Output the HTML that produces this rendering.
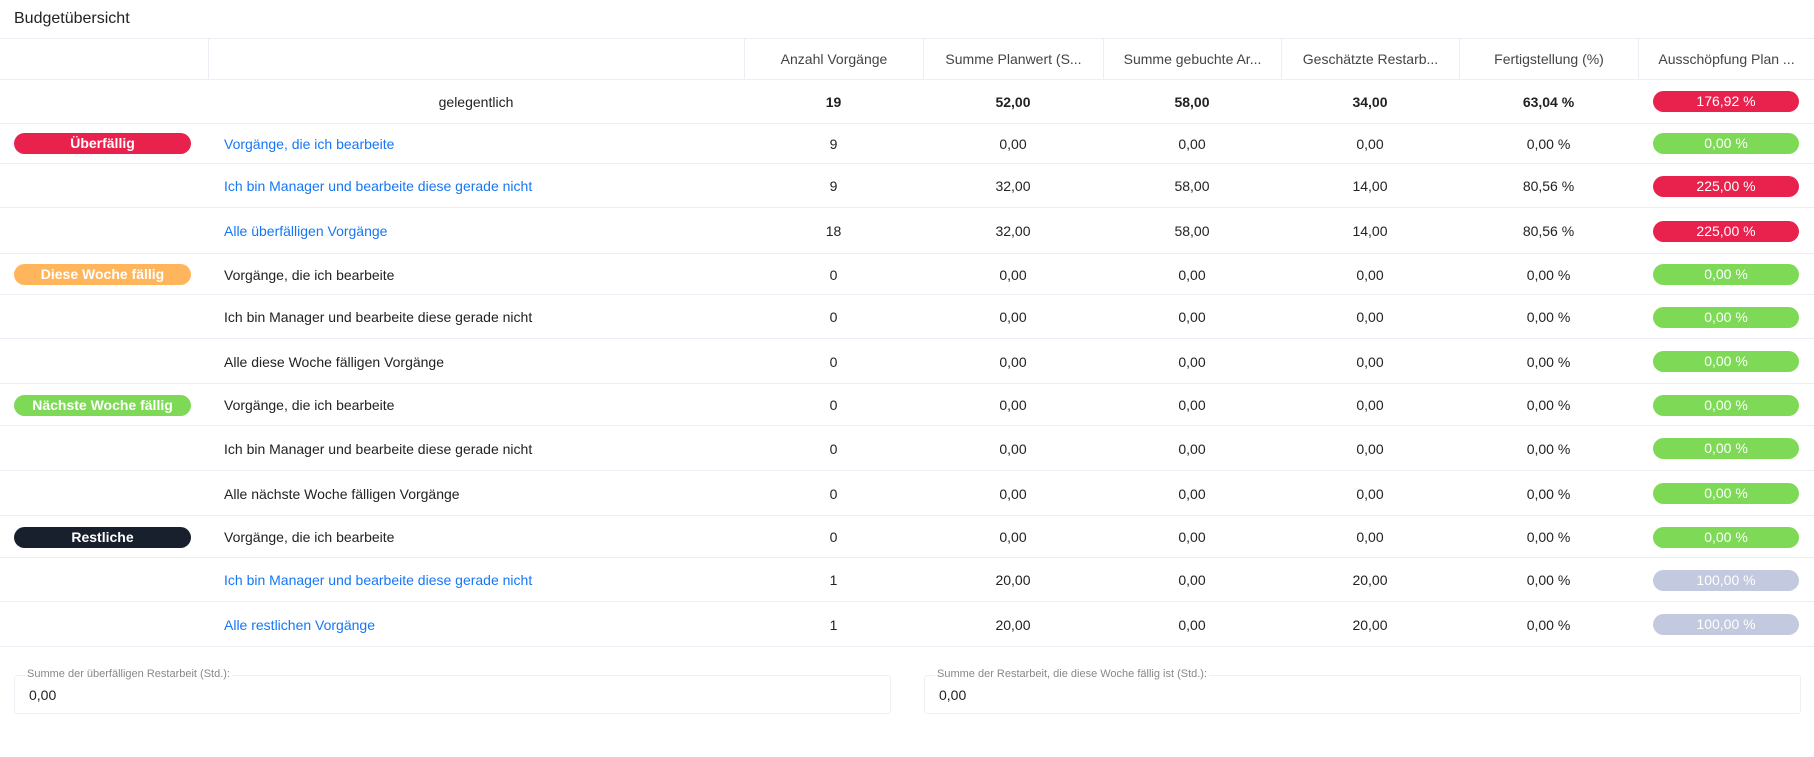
<!DOCTYPE html>
<html><head><meta charset="utf-8"><style>
*{margin:0;padding:0;box-sizing:border-box}
body{width:1814px;height:757px;background:#fff;font-family:"Liberation Sans",sans-serif;font-size:14px;color:#222;position:relative;overflow:hidden}
.title{position:absolute;left:14px;top:10px;font-size:16px;color:#222}
.row{position:absolute;left:0;width:1814px;border-bottom:1px solid #eceef5;display:flex;align-items:center}
.c{position:absolute;top:0;bottom:0;display:flex;align-items:center;justify-content:center;white-space:nowrap}
.hdr .c{color:#444;border-left:1px solid #eceef5}
.hdr .c:first-child{border-left:none}
.lab{justify-content:flex-start!important;padding-left:16px}
.pill{position:absolute;left:14px;width:177px;height:21px;border-radius:11px;color:#fff;font-weight:bold;text-align:center;line-height:21px;font-size:14px}
.bad{width:146px;height:21px;border-radius:11px;color:#fff;text-align:center;line-height:21px}
.r{background:#e8214d}.g{background:#7ed957}.gr{background:#c3c9de}
a{color:#1677f5;text-decoration:none}
b{font-weight:bold}
.field{position:absolute;top:675px;height:39px;border:1px solid #eef0f6;border-radius:3px}
.field span{position:absolute;top:-8px;left:10px;background:#fff;font-size:11px;color:#888;padding:0 2px}
.field div{position:absolute;left:14px;top:11px;font-size:14px}
</style></head><body>
<div class="title">Budgetübersicht</div>
<div id="t"></div>
<div class="field" style="left:14px;width:877px"><span>Summe der überfälligen Restarbeit (Std.):</span><div>0,00</div></div>
<div class="field" style="left:924px;width:877px"><span>Summe der Restarbeit, die diese Woche fällig ist (Std.):</span><div>0,00</div></div>
<script>
const X=[0,208,744,923,1103,1281,1459,1638,1814];
function cells(v,cls){let h='';for(let i=0;i<8;i++){h+=`<div class="c ${i==1&&cls!='hdr'&&cls!='sum'?'lab':''}" style="left:${X[i]}px;width:${X[i+1]-X[i]}px">${v[i]||''}</div>`}return h}
let out='';
function row(top,h,v,cls,pill){out+=`<div class="row ${cls||''}" style="top:${top}px;height:${h}px;${cls=='hdr'?'border-top:1px solid #eceef5':''}">${cells(v,cls)}${pill||''}</div>`}
row(38,42,['','','Anzahl Vorgänge','Summe Planwert (S...','Summe gebuchte Ar...','Geschätzte Restarb...','Fertigstellung (%)','Ausschöpfung Plan ...'],'hdr');
row(80,44,['','gelegentlich','<b>19</b>','<b>52,00</b>','<b>58,00</b>','<b>34,00</b>','<b>63,04 %</b>','<div class="bad r">176,92 %</div>'],'sum');
const B=p=>`<div class="bad ${p[0]}">${p[1]}</div>`;
const groups=[
 ['Überfällig','#e8214d',[['<a>Vorgänge, die ich bearbeite</a>','9','0,00','0,00','0,00','0,00 %',['g','0,00 %']],['<a>Ich bin Manager und bearbeite diese gerade nicht</a>','9','32,00','58,00','14,00','80,56 %',['r','225,00 %']],['<a>Alle überfälligen Vorgänge</a>','18','32,00','58,00','14,00','80,56 %',['r','225,00 %']]]],
 ['Diese Woche fällig','#ffb55c',[['Vorgänge, die ich bearbeite'],['Ich bin Manager und bearbeite diese gerade nicht'],['Alle diese Woche fälligen Vorgänge']]],
 ['Nächste Woche fällig','#7ed957',[['Vorgänge, die ich bearbeite'],['Ich bin Manager und bearbeite diese gerade nicht'],['Alle nächste Woche fälligen Vorgänge']]],
 ['Restliche','#18202e',[['Vorgänge, die ich bearbeite'],['<a>Ich bin Manager und bearbeite diese gerade nicht</a>','1','20,00','0,00','20,00','0,00 %',['gr','100,00 %']],['<a>Alle restlichen Vorgänge</a>','1','20,00','0,00','20,00','0,00 %',['gr','100,00 %']]]]];
const tops=[[124,165,209,255],[255,296,340,385],[385,427,472,517],[517,559,603,648]];
groups.forEach((g,gi)=>{g[2].forEach((r,ri)=>{
 if(r.length==1)r=[r[0],'0','0,00','0,00','0,00','0,00 %',['g','0,00 %']];
 const t=tops[gi][ri],h=tops[gi][ri+1]-t-1;
 const pill=ri==0?`<div class="pill" style="background:${g[1]}">${g[0]}</div>`:'';
 row(t,h,['',r[0],r[1],r[2],r[3],r[4],r[5],B(r[6])],'',pill);
})});
document.getElementById('t').innerHTML=out;
</script>
</body></html>
